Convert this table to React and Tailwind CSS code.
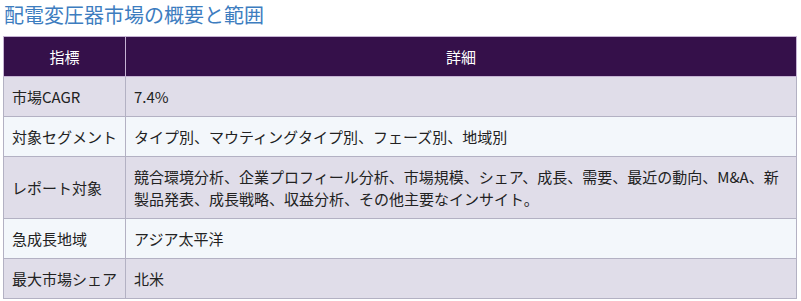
const rows = [
  { label: "市場CAGR", value: "7.4%" },
  { label: "対象セグメント", value: "タイプ別、マウティングタイプ別、フェーズ別、地域別" },
  {
    label: "レポート対象",
    value:
      "競合環境分析、企業プロフィール分析、市場規模、シェア、成長、需要、最近の動向、M&A、新製品発表、成長戦略、収益分析、その他主要なインサイト。",
  },
  { label: "急成長地域", value: "アジア太平洋" },
  { label: "最大市場シェア", value: "北米" },
];

export default function App() {
  return (
    <div
      className="w-[801px] h-[301px] bg-white overflow-hidden px-[3px]"
      style={{ fontFamily: "'Noto Sans CJK JP', 'Noto Sans', sans-serif" }}
    >
      {/* Section heading */}
      <h2 className="h-[36px] pl-[1px] pt-[1px] text-[20px] leading-[28px] text-[#3d7dbf]">
        配電変圧器市場の概要と範囲
      </h2>

      {/* Overview table */}
      <table className="w-[794px] border-collapse table-fixed text-[15px] leading-[22px] text-[#222]">
        <colgroup>
          <col className="w-[122px]" />
          <col />
        </colgroup>
        <thead>
          <tr className="bg-[#35104a] text-white">
            <th className="h-[40px] p-0 border border-[#c5b3d3] font-normal text-center">指標</th>
            <th className="h-[40px] p-0 border border-[#c5b3d3] font-normal text-center">詳細</th>
          </tr>
        </thead>
        <tbody>
          {rows.map((row, i) => (
            <tr key={row.label} className={i % 2 === 0 ? "bg-[#e0dde9]" : "bg-[#f3f7fb]"}>
              <td className="border border-[#b3b1c3] px-[8px] py-[8.5px] align-middle whitespace-nowrap">
                {row.label}
              </td>
              <td className="border border-[#b3b1c3] px-[8px] py-[8.5px] align-middle">{row.value}</td>
            </tr>
          ))}
        </tbody>
      </table>
    </div>
  );
}
